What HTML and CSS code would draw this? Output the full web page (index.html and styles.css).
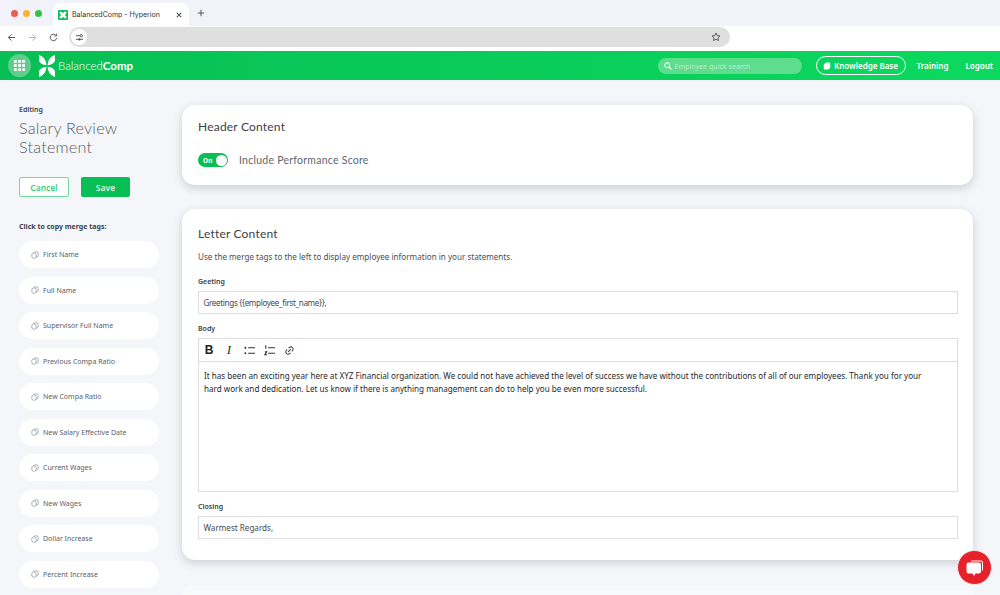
FILE: index.html
```html
<!DOCTYPE html>
<html lang="en">
<head>
  <meta charset="UTF-8">
  <title>BalancedComp - Hyperion</title>
  <link rel="stylesheet" href="styles.css">
</head>
<body>

  <!-- Browser chrome -->
  <div class="tabbar">
    <div class="lights">
      <span class="light red"></span>
      <span class="light yellow"></span>
      <span class="light green"></span>
    </div>
    <div class="tab">
      <svg class="favicon" viewBox="0 0 12 12"><rect width="12" height="12" rx="1.500" fill="#0bbf57"/><path d="M2 2h2.600L6 4l1.400-2H10v2.400L8 6l2 1.600V10H7.400L6 8l-1.400 2H2V7.600L4 6 2 4.400z" fill="#fff"/></svg>
      <span class="tab-title">BalancedComp - Hyperion</span>
      <svg class="tab-close" viewBox="0 0 8 8"><path d="M1 1l6 6M7 1L1 7" stroke="#333" stroke-width="1.400"/></svg>
    </div>
    <svg class="tab-new" viewBox="0 0 10 10"><path d="M5 1v8M1 5h8" stroke="#444" stroke-width="1.100"/></svg>
  </div>

  <div class="toolbar">
    <svg class="nav-icon" viewBox="0 0 10 10"><path d="M9 5H1.500M5 1.500L1.500 5 5 8.500" fill="none" stroke="#555" stroke-width="1.100"/></svg>
    <svg class="nav-icon" viewBox="0 0 10 10"><path d="M1 5h7.500M5 1.500L8.500 5 5 8.500" fill="none" stroke="#b5b5b5" stroke-width="1.100"/></svg>
    <svg class="nav-icon" viewBox="0 0 10 10"><path d="M8.500 5.500A3.600 3.600 0 1 1 7.500 2.400M8.500 .8v2.400H6.100" fill="none" stroke="#555" stroke-width="1.100"/></svg>
    <div class="urlbar">
      <span class="site-icon">
        <svg viewBox="0 0 10 10"><path d="M1 3h4.500M1 7h2.500M6.500 7H9" stroke="#444" stroke-width="1"/><circle cx="7" cy="3" r="1.300" fill="none" stroke="#444"/><circle cx="5" cy="7" r="1.300" fill="#444"/></svg>
      </span>
      <svg class="star" viewBox="0 0 12 12"><path d="M6 1.200l1.450 3.100 3.350.4-2.500 2.300.67 3.300L6 8.650 3.030 10.300l.67-3.300L1.200 4.700l3.350-.4z" fill="none" stroke="#444" stroke-width="1"/></svg>
    </div>
  </div>

  <!-- App header -->
  <header class="appbar">
    <span class="apps-btn">
      <svg viewBox="0 0 12 12" fill="#fff">
        <rect x="0" y="0" width="3" height="3"/><rect x="4.500" y="0" width="3" height="3"/><rect x="9" y="0" width="3" height="3"/>
        <rect x="0" y="4.500" width="3" height="3"/><rect x="4.500" y="4.500" width="3" height="3"/><rect x="9" y="4.500" width="3" height="3"/>
        <rect x="0" y="9" width="3" height="3"/><rect x="4.500" y="9" width="3" height="3"/><rect x="9" y="9" width="3" height="3"/>
      </svg>
    </span>
    <svg class="logo" viewBox="0 0 16 22" fill="#fff">
      <path d="M0 0C3.500 1.200 7 4 7.400 10.200 3.800 10 .5 8 0 5.500z"/>
      <path d="M16 0C12.500 1.200 9 4 8.600 10.200 12.200 10 15.500 8 16 5.500z"/>
      <path d="M0 22C3.500 20.800 7 18 7.400 11.800 3.800 12 .5 14 0 16.500z"/>
      <path d="M16 22C12.500 20.800 9 18 8.600 11.800 12.200 12 15.500 14 16 16.500z"/>
    </svg>
    <span class="brand">Balanced<b>Comp</b></span>

    <div class="search">
      <svg viewBox="0 0 10 10"><circle cx="4" cy="4" r="3" fill="none" stroke="#fff" stroke-width="1.300"/><path d="M6.300 6.300L9.300 9.300" stroke="#fff" stroke-width="1.500"/></svg>
      <span>Employee quick search</span>
    </div>
    <a class="kb-link">
      <svg viewBox="0 0 10 10" fill="#fff"><rect x="1" y="2" width="6" height="7.500" rx="1.500"/><rect x="3" y=".5" width="6" height="8" rx="1.500"/></svg>
      Knowledge Base
    </a>
    <a class="nav-link">Training</a>
    <a class="nav-link">Logout</a>
  </header>

  <div class="page">
    <aside class="sidebar">
      <div class="editing">Editing</div>
      <h1>Salary Review Statement</h1>
      <div class="actions">
        <button class="btn btn-outline">Cancel</button>
        <button class="btn btn-solid">Save</button>
      </div>
      <div class="tags-title">Click to copy merge tags:</div>
      <div class="tag"><svg viewBox="0 0 10 10"><use href="#copy"/></svg>First Name</div>
      <div class="tag"><svg viewBox="0 0 10 10"><use href="#copy"/></svg>Full Name</div>
      <div class="tag"><svg viewBox="0 0 10 10"><use href="#copy"/></svg>Supervisor Full Name</div>
      <div class="tag"><svg viewBox="0 0 10 10"><use href="#copy"/></svg>Previous Compa Ratio</div>
      <div class="tag"><svg viewBox="0 0 10 10"><use href="#copy"/></svg>New Compa Ratio</div>
      <div class="tag"><svg viewBox="0 0 10 10"><use href="#copy"/></svg>New Salary Effective Date</div>
      <div class="tag"><svg viewBox="0 0 10 10"><use href="#copy"/></svg>Current Wages</div>
      <div class="tag"><svg viewBox="0 0 10 10"><use href="#copy"/></svg>New Wages</div>
      <div class="tag"><svg viewBox="0 0 10 10"><use href="#copy"/></svg>Dollar Increase</div>
      <div class="tag"><svg viewBox="0 0 10 10"><use href="#copy"/></svg>Percent Increase</div>
    </aside>

    <main class="content">
      <section class="card card-header">
        <h2>Header Content</h2>
        <div class="toggle-row">
          <span class="toggle"><span class="toggle-label">On</span><span class="knob"></span></span>
          <span class="toggle-text">Include Performance Score</span>
        </div>
      </section>

      <section class="card card-letter">
        <h2>Letter Content</h2>
        <p class="hint">Use the merge tags to the left to display employee information in your statements.</p>

        <label class="field-label">Geeting</label>
        <div class="input input-tight">Greetings {{employee_first_name}},</div>

        <label class="field-label">Body</label>
        <div class="editor">
          <div class="editor-tools">
            <span class="tool tool-b">B</span>
            <span class="tool tool-i">I</span>
            <span class="tool"><svg viewBox="0 0 12 12"><circle cx="1.500" cy="3" r="1.100" fill="#333"/><circle cx="1.500" cy="9" r="1.100" fill="#333"/><path d="M4.500 3H12M4.500 9H12" stroke="#333" stroke-width="1.200"/></svg></span>
            <span class="tool"><svg viewBox="0 0 12 12"><path d="M1 1h1v3M1 7.500h2L1 10.500h2M4.500 3H12M4.500 9H12" fill="none" stroke="#333" stroke-width="1.100"/></svg></span>
            <span class="tool"><svg viewBox="0 0 12 12"><path d="M4.600 7.400l2.800-2.800M5 3.500l1-1a2.500 2.500 0 0 1 3.500 3.500l-1 1M7 8.500l-1 1A2.500 2.500 0 0 1 2.500 6l1-1" fill="none" stroke="#333" stroke-width="1.100"/></svg></span>
          </div>
          <div class="editor-body">It has been an exciting year here at XYZ Financial organization. We could not have achieved the level of success we have without the contributions of all of our employees. Thank you for your hard work and dedication. Let us know if there is anything management can do to help you be even more successful.</div>
        </div>

        <label class="field-label">Closing</label>
        <div class="input">Warmest Regards,</div>
      </section>

      <section class="card-next"></section>
    </main>
  </div>

  <button class="chat-btn">
    <svg viewBox="0 0 20 20" fill="#fff">
      <path d="M6 2.500h10a2 2 0 0 1 2 2v8h-1V4.500a1 1 0 0 0-1-1H6z"/>
      <path d="M3.500 4.500h10.500a2 2 0 0 1 2 2v7a2 2 0 0 1-2 2h-3.400L9 18l-1.500-2.500h-4a2 2 0 0 1-2-2v-7a2 2 0 0 1 2-2z"/>
    </svg>
  </button>

  <svg class="defs" width="0" height="0">
    <symbol id="copy" viewBox="0 0 10 10">
      <rect x="3.500" y="1" width="5.500" height="6.500" rx="2.200" fill="none" stroke="#8b9096" stroke-width=".9"/>
      <rect x="1" y="2.500" width="5.500" height="6.500" rx="2.200" fill="#fff" stroke="#8b9096" stroke-width=".9"/>
    </symbol>
  </svg>
</body>
</html>
```

FILE: styles.css
```css
* {
  box-sizing: border-box;
}
html, body {
  margin: 0;
  height: 595px;
  overflow: hidden;
}
body {
  font-family: "Noto Sans", "Open Sans", sans-serif;
  background-color: #f5f6f9;
  color: #3b4048;
}

/* browser chrome */
.tabbar {
  height: 26px;
  background-color: #f2f3fa;
  display: flex;
  align-items: center;
  padding-left: 11px;
}
.lights {
  display: flex;
  gap: 5px;
  width: 42px;
}
.light {
  width: 7px;
  height: 7px;
  border-radius: 50%;
}
.light.red { background-color: #ee5a52; }
.light.yellow { background-color: #f5b72e; }
.light.green { background-color: #35c23f; }
.tab {
  margin-top: 3px;
  width: 136px;
  height: 23px;
  background-color: #fff;
  border-radius: 7px 7px 0 0;
  display: flex;
  align-items: center;
  padding: 0 7px 0 5px;
}
.favicon {
  width: 10px;
  height: 10px;
  flex: none;
}
.tab-title {
  font-size: 7px;
  font-family: Inter, sans-serif;
  color: #333;
  margin-left: 4px;
  flex: 1;
  white-space: nowrap;
}
.tab-close {
  width: 6px;
  height: 6px;
}
.tab-new {
  width: 8px;
  height: 8px;
  margin-left: 8px;
}
.toolbar {
  height: 25px;
  background-color: #fff;
  display: flex;
  align-items: center;
  padding: 0 0 3px 7px;
}
.nav-icon {
  width: 9px;
  height: 9px;
  margin-right: 12px;
}
.urlbar {
  margin-left: -1px;
  width: 661px;
  height: 20px;
  border-radius: 10px;
  background-color: #dfdfdf;
  display: flex;
  align-items: center;
  justify-content: space-between;
  padding: 0 9px 0 2px;
}
.site-icon {
  width: 16px;
  height: 16px;
  border-radius: 50%;
  background-color: #fff;
  display: flex;
  align-items: center;
  justify-content: center;
}
.site-icon svg {
  width: 9px;
  height: 9px;
}
.star {
  width: 10px;
  height: 10px;
}

/* app header */
.appbar {
  height: 29px;
  background-color: #08cf5a;
  background-image: linear-gradient(90deg, #07bf54, #0bd95f);
  display: flex;
  align-items: center;
  padding-left: 8px;
  color: #fff;
}
.apps-btn {
  width: 23px;
  height: 23px;
  border-radius: 50%;
  background-color: #5fcd8b;
  display: flex;
  align-items: center;
  justify-content: center;
}
.apps-btn svg {
  width: 11px;
  height: 11px;
}
.logo {
  width: 16px;
  height: 22px;
  margin-left: 8px;
}
.brand {
  font-family: Lato, sans-serif;
  font-size: 11.500px;
  margin-left: 3px;
  font-weight: 300;
}
.brand b {
  font-weight: 700;
}
.search {
  margin-left: auto;
  width: 144px;
  height: 16px;
  border-radius: 8px;
  background-color: #5fdd8f;
  display: flex;
  align-items: center;
  padding-left: 6px;
  font-size: 7.100px;
  color: #b5f0cb;
}
.search svg {
  width: 8px;
  height: 8px;
  margin-right: 3px;
}
.kb-link {
  margin-left: 14px;
  width: 90px;
  height: 19px;
  border: 1px solid #fff;
  border-radius: 10px;
  display: flex;
  align-items: center;
  justify-content: center;
  font-size: 8px;
  font-weight: 600;
  white-space: nowrap;
}
.kb-link svg {
  width: 8px;
  height: 8px;
  margin-right: 3px;
}
.nav-link {
  font-size: 8px;
  font-weight: 600;
  margin-left: 11px;
}
.nav-link + .nav-link {
  margin-left: 17px;
  margin-right: 7px;
}

/* page */
.page {
  display: flex;
  align-items: flex-start;
  padding: 25px 27px 0 19px;
}
.sidebar {
  width: 140px;
  flex: none;
}
.editing {
  font-size: 7px;
  font-weight: 600;
  line-height: 10px;
}
h1 {
  margin: 4px 0 0;
  font-family: Lato, sans-serif;
  font-size: 16.200px;
  font-weight: 300;
  line-height: 18.500px;
  letter-spacing: .2px;
  color: #555b62;
}
.actions {
  display: flex;
  gap: 12px;
  margin-top: 21px;
}
.btn {
  width: 50px;
  height: 20px;
  padding: 0;
  font-family: inherit;
  font-size: 8.500px;
  font-weight: 600;
  border-radius: 2px;
}
.btn-outline {
  background-color: #fff;
  color: #3fcf7c;
  border: 1px solid #6fdca0;
}
.btn-solid {
  width: 49px;
  background-color: #07bf54;
  color: #d8f7e4;
  border: none;
}
.tags-title {
  margin-top: 25px;
  font-size: 7px;
  font-weight: 700;
  line-height: 10px;
  margin-bottom: 9px;
}
.tag {
  height: 27px;
  margin-bottom: 8.500px;
  border-radius: 14px;
  background-color: #fff;
  display: flex;
  align-items: center;
  padding-left: 12px;
  font-size: 7px;
  color: #5b6067;
}
.tag:last-child {
  margin-bottom: 0;
}
.tag svg {
  width: 8px;
  height: 8px;
  margin-right: 4px;
}
.content {
  flex: 1;
  margin-left: 23px;
  min-width: 0;
}
.card {
  background-color: #fff;
  border-radius: 13px;
  box-shadow: 0 3px 10px rgba(60, 70, 90, .22);
}
.card h2 {
  margin: 0;
  font-family: Lato, sans-serif;
  font-size: 12px;
  font-weight: 400;
  line-height: 16px;
  letter-spacing: .2px;
  color: #3c4149;
}
.card-header {
  height: 80px;
  padding: 14px 16px;
}
.toggle-row {
  display: flex;
  align-items: center;
  margin-top: 18px;
}
.toggle {
  width: 30px;
  height: 14px;
  border-radius: 7px;
  background-color: #07bf54;
  display: flex;
  align-items: center;
  justify-content: space-between;
  padding: 0 1.500px 0 5px;
}
.toggle-label {
  font-size: 6.500px;
  font-weight: 700;
  color: #fff;
}
.knob {
  width: 11px;
  height: 11px;
  border-radius: 50%;
  background-color: #fff;
}
.toggle-text {
  margin-left: 11px;
  font-family: Lato, sans-serif;
  font-size: 10.500px;
  letter-spacing: .25px;
  color: #60656c;
}
.card-letter {
  margin-top: 24px;
  height: 351px;
  padding: 17px 15px 0 16px;
}
.hint {
  margin: 9px 0 0;
  font-size: 8.100px;
  line-height: 12px;
  color: #4a4f56;
}
.field-label {
  display: block;
  font-size: 7px;
  font-weight: 600;
  line-height: 10px;
  margin-top: 10px;
  margin-bottom: 4px;
}
.hint + .field-label {
  margin-top: 14px;
}
.input {
  height: 23px;
  border: 1px solid #dcdddf;
  padding-left: 4.500px;
  font-size: 8.100px;
  line-height: 21px;
  color: #444a50;
}
.input-tight {
  letter-spacing: -.35px;
}
.editor {
  height: 154px;
  border: 1px solid #dcdddf;
  display: flex;
  flex-direction: column;
}
.editor-tools {
  height: 23px;
  border-bottom: 1px solid #dcdddf;
  display: flex;
  align-items: center;
  gap: 2px;
  padding-left: 1px;
  flex: none;
}
.tool {
  width: 18px;
  height: 18px;
  display: flex;
  align-items: center;
  justify-content: center;
  font-size: 12px;
  color: #222;
  border-radius: 2px;
  box-shadow: 0 0 1px rgba(0, 0, 0, .12);
}
.tool svg {
  width: 11px;
  height: 11px;
}
.tool-b {
  font-family: "Liberation Sans", sans-serif;
  font-weight: 700;
}
.tool-i {
  font-family: "Liberation Serif", serif;
  font-style: italic;
}
.editor-body {
  padding: 8px 25px 8px 5px;
  font-size: 8.100px;
  line-height: 12.500px;
  color: #26292d;
}
.card-next {
  margin-top: 25px;
  height: 10px;
  background-color: #f8f9fb;
  border-radius: 13px 13px 0 0;
}

/* chat */
.chat-btn {
  position: fixed;
  right: 8px;
  bottom: 10px;
  width: 35px;
  height: 35px;
  padding: 0;
  border: 1px solid #e8e8ea;
  border-radius: 50%;
  background-color: #e62129;
  display: flex;
  align-items: center;
  justify-content: center;
}
.chat-btn svg {
  width: 20px;
  height: 20px;
}
.defs {
  position: absolute;
}
```
